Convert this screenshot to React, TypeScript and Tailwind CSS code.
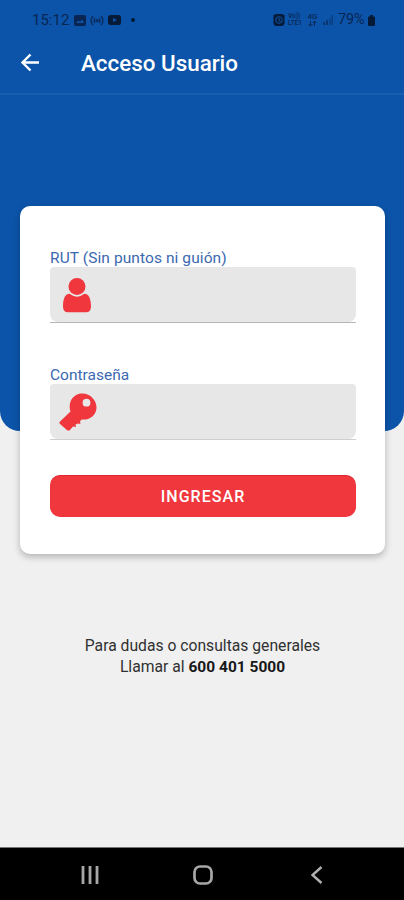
import React from "react";

function StatusBar() {
  return (
    <div className="flex h-10 items-center justify-between pl-[32px] pr-[29px] text-[#092653]">
      <div className="flex items-center">
        <span className="w-[37px] whitespace-nowrap text-[15px] leading-5">15:12</span>
        <svg className="ml-[5px]" width="12" height="11" viewBox="0 0 12 11">
          <rect width="12" height="11" rx="2" fill="currentColor" />
          <path d="M2 8 4.5 5.5 6 7 8 4.5 10 8Z" fill="#0c54a9" />
        </svg>
        <svg className="ml-[4px]" width="14" height="11" viewBox="0 0 14 11" fill="none" stroke="currentColor" strokeWidth="1.2">
          <path d="M3 1Q-1 5.500 3 10M11 1Q15 5.500 11 10M5 3Q3 5.500 5 8M9 3Q11 5.500 9 8" />
          <circle cx="7" cy="5.500" r="1" />
        </svg>
        <svg className="ml-[4px]" width="13" height="10" viewBox="0 0 13 10">
          <rect width="13" height="10" rx="2.500" fill="#051a36" />
          <path d="M5 3 9 5 5 7Z" fill="#0c54a9" />
        </svg>
        <span className="ml-[10px] size-1 rounded-full bg-[#051a36]" />
      </div>
      <div className="flex items-center">
        <svg width="12" height="12" viewBox="0 0 11 12">
          <path d="M0 1 3 0H8L11 1V10L9 12H2L0 10Z" fill="#051a36" />
          <circle cx="5.500" cy="6" r="3.300" fill="none" stroke="#0c54a9" />
          <path d="M5.500 4V6.500L7 7.500" fill="none" stroke="#0c54a9" />
        </svg>
        <span className="ml-[3px] flex w-[17px] flex-col whitespace-nowrap text-[6.500px] font-medium">
          <span className="h-[7px] leading-[7px]">Vo))</span>
          <span className="h-[7px] leading-[7px]">LTE1</span>
        </span>
        <span className="ml-px flex w-[13px] flex-col items-center text-[8px] font-medium">
          <span className="h-[7px] leading-[7px]">4G</span>
          <svg width="9" height="7" viewBox="0 0 9 7" fill="none" stroke="currentColor">
            <path d="M2.500 1V6M.5 4 2.500 6 4.500 4M6.500 6V1M4.500 3 6.500 1 8.500 3" />
          </svg>
        </span>
        <svg className="ml-[4px]" width="10" height="10" viewBox="0 0 10 10" stroke="currentColor" strokeWidth="1.3">
          <path d="M1 10V7M4 10V5" />
          <path d="M7 10V3M9.200 10V0" opacity=".5" />
        </svg>
        <span className="ml-[5px] w-[28px] whitespace-nowrap text-[14.500px] leading-5 tracking-[-0.200px]">79%</span>
        <svg className="ml-[2px]" width="7" height="11" viewBox="0 0 7 11">
          <path d="M2 0H5V1.500H6Q7 1.500 7 2.500V10Q7 11 6 11H1Q0 11 0 10V2.500Q0 1.500 1 1.500H2Z" fill="#051a36" />
        </svg>
      </div>
    </div>
  );
}

function UserIcon() {
  return (
    <svg width="28" height="36" viewBox="0 0 28 36" fill="#f0373d">
      <path d="M6.500 16.800C2 16.800 0 22 0 29.500Q0 35.300 5 35.300H23Q28 35.300 28 29.500C28 22 26 16.800 21.500 16.800Q14 22.500 6.500 16.800Z" />
      <circle cx="14" cy="9.500" r="8.500" />
    </svg>
  );
}

function KeyIcon() {
  return (
    <svg width="38" height="38" viewBox="0 0 38 38" fill="#f0373d">
      <path
        fillRule="evenodd"
        d="M11.500 18.500C8.500 8 15 .5 23.500 .5C31.500 .5 37.500 7.500 37.500 14.500C37.500 22 31 27.500 22.500 26.500L21 28.500L21.500 31L19 30.500L16.500 31.500L17 34L14 33.500L10.500 37.500L8.500 37.500L.5 30.500V29ZM27.500 5.800A3.900 3.900 0 1 0 27.500 13.600A3.900 3.900 0 1 0 27.500 5.800Z"
      />
    </svg>
  );
}

function Field({ label, children, line }: { label: React.ReactNode; children: React.ReactNode; line: string }) {
  return (
    <label className="block">
      <span className="block h-[19px] whitespace-nowrap text-[15.500px] leading-[20px] text-[#3b69b0]">{label}</span>
      <span className={`flex h-[56px] w-[306px] border-b ${line}`}>
        <span className="flex h-[55px] w-full items-start rounded-t-[4px] rounded-b-[8px] bg-[#e7e7e7]">{children}</span>
      </span>
    </label>
  );
}

export default function App() {
  return (
    <div className="flex h-[900px] w-[404px] flex-col overflow-hidden bg-[#f0f0f0] font-['Roboto',sans-serif]">
      <header className="h-[431px] shrink-0 rounded-b-[20px] bg-[#0c54a9]">
        <StatusBar />
        <div className="flex h-[55px] items-center border-b-2 border-[#1a5eb0] pb-[7px] pl-[20px]">
          <svg width="20" height="20" viewBox="0 0 20 20" fill="none" stroke="white" strokeWidth="2.400">
            <path d="M19 9.500H2.500M10.500 1.500 2.500 9.500 10.500 17.500" />
          </svg>
          <h1 className="ml-[41px] pb-px text-[22.400px] font-medium leading-7 text-white">Acceso Usuario</h1>
        </div>
      </header>

      <main className="-mt-[225px] ml-[20px] h-[348px] w-[365px] shrink-0 rounded-[10px] bg-white px-[30px] pt-[42px] shadow-[0_3px_7px_rgba(0,0,0,0.25)]">
        <Field label={<span className="tracking-[0.090px]">RUT (Sin puntos ni guión)</span>} line="border-[#b5b5b5]">
          <span className="ml-[13px] mt-[10px]"><UserIcon /></span>
        </Field>
        <div className="mt-[42px]">
          <Field label="Contraseña" line="border-[#cfcfcf]">
            <span className="ml-[9px] mt-[9px]"><KeyIcon /></span>
          </Field>
        </div>
        <button className="mt-[35px] flex h-[42px] w-[306px] items-center justify-center rounded-[10px] border-t border-[#dc252c] bg-[#f0373d] text-[16px] font-medium tracking-[1.050px] text-white">
          INGRESAR
        </button>
      </main>

      <p className="mt-[81px] pl-px text-center text-[15.700px] leading-[21px] text-[#303030]">
        Para dudas o consultas generales
        <br />
        Llamar al <strong className="text-[15.500px] font-bold text-[#181818]">600 401 5000</strong>
      </p>

      <nav className="mt-auto flex h-[53px] shrink-0 items-center border-t border-[#777] bg-black pl-[81px] pt-px">
        <svg width="19" height="18" viewBox="0 0 19 18" stroke="#a7a7a7" strokeWidth="2.800">
          <path d="M2 0V18M9 0V18M16 0V18" />
        </svg>
        <svg className="ml-[93px]" width="20" height="20" viewBox="0 0 20 20" fill="none" stroke="#a7a7a7" strokeWidth="2.700">
          <rect x="1.500" y="1.500" width="17" height="17" rx="5.500" />
        </svg>
        <svg className="ml-[98px]" width="12" height="18" viewBox="0 0 12 18" fill="none" stroke="#b0b0b0" strokeWidth="2.400">
          <path d="M10.500 1 1.500 9 10.500 17" />
        </svg>
      </nav>
    </div>
  );
}
